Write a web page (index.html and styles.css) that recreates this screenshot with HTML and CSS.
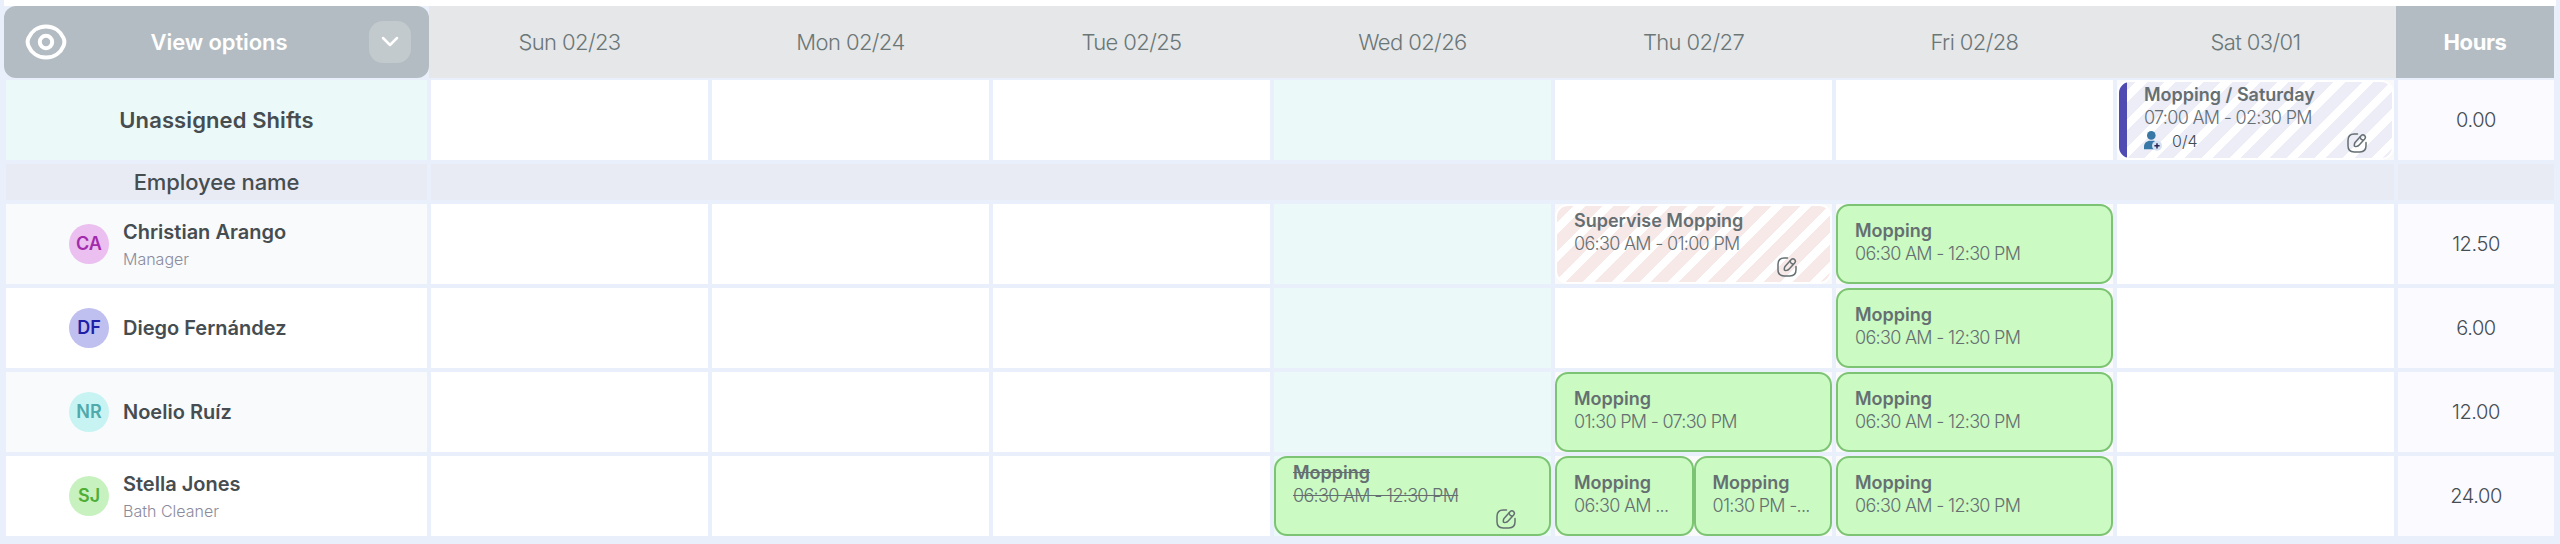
FILE: index.html
```
<!DOCTYPE html>
<html lang="en">
<head>
    <meta charset="UTF-8">
    <meta name="viewport" content="width=device-width, initial-scale=1.0">
    <title>Weekly Schedule</title>
    <link rel="stylesheet" href="styles.css">
</head>
<body>
    <!-- Shared icons -->
    <svg class="icon-defs" width="0" height="0">
        <symbol id="icon-edit" viewBox="0 0 20 20">
            <path d="M10.5 1H7.2C3.2 1 1 3.2 1 7.2v5.6C1 16.8 3.2 19 7.2 19h5.6c4 0 6.2-2.2 6.2-6.2V9.5"/>
            <path d="M14.3 2.6 8.2 9.2c-.4.5-.7 1.2-.8 1.8l-.1 1.4c0 .7.5 1.2 1.2 1.1l1.5-.2c.6-.1 1.2-.4 1.7-.9l6-6.400c1-1.100 1-2.300-.1-3.400s-2.300-1.100-3.300 0z"/>
            <path d="M13 4.100c.4 1.500 1.700 2.700 3.200 3.100"/>
        </symbol>
    </svg>

    <div class="schedule">
        <div class="schedule-header">
            <div class="view-options">
                <svg class="eye-icon" width="42" height="36" viewBox="0 0 42 36">
                    <path d="M21 2.500C12 2.500 6 8 3.500 14c-1.300 3-1.300 5 0 8C6 28 12 33.500 21 33.500S36 28 38.500 22c1.300-3 1.300-5 0-8C36 8 30 2.500 21 2.500z"/>
                    <circle cx="21" cy="18" r="6.200"/>
                </svg>
                <span class="view-label">View options</span>
                <button class="toggle-btn">
                    <svg width="18" height="12" viewBox="0 0 18 12"><path d="M2 2l7 7 7-7"/></svg>
                </button>
            </div>
            <div class="days">
                <div class="day">Sun 02/23</div>
                <div class="day">Mon 02/24</div>
                <div class="day">Tue 02/25</div>
                <div class="day">Wed 02/26</div>
                <div class="day">Thu 02/27</div>
                <div class="day">Fri 02/28</div>
                <div class="day">Sat 03/01</div>
            </div>
            <div class="hours-title">Hours</div>
        </div>

        <div class="schedule-body">
            <!-- Unassigned -->
            <div class="cell unassigned">Unassigned Shifts</div>
            <div class="cell"></div>
            <div class="cell"></div>
            <div class="cell"></div>
            <div class="cell today"></div>
            <div class="cell"></div>
            <div class="cell"></div>
            <div class="cell filled">
                <div class="shift open">
                    <div class="shift-title">Mopping / Saturday</div>
                    <div class="shift-time">07:00 AM - 02:30 PM</div>
                    <div class="slots">
                        <svg width="19" height="20" viewBox="0 0 19 20">
                            <circle cx="7.3" cy="4.4" r="4.3" fill="#3878a6"/>
                            <path d="M0 18.200v-2.500C0 12 2.800 9.800 6.200 9.800h2.600c2 0 3.500.6 4.600 1.800v6.600z" fill="#3878a6"/>
                            <circle cx="13" cy="14.8" r="5" fill="#d5e0f1"/>
                            <path d="M13 12.200v5.200M10.400 14.800h5.200" stroke="#2a2555" stroke-width="1.5"/>
                        </svg>
                        <span>0/4</span>
                    </div>
                    <svg class="edit-icon"><use href="#icon-edit"/></svg>
                </div>
            </div>
            <div class="cell hours">0.00</div>

            <!-- Employee header band -->
            <div class="band">Employee name</div>
            <div class="band band-days"></div>
            <div class="band"></div>

            <!-- Christian -->
            <div class="cell employee alt">
                <div class="avatar avatar-ca">CA</div>
                <div class="info">
                    <div class="name">Christian Arango</div>
                    <div class="role">Manager</div>
                </div>
            </div>
            <div class="cell"></div>
            <div class="cell"></div>
            <div class="cell"></div>
            <div class="cell today"></div>
            <div class="cell filled">
                <div class="shift pending">
                    <div class="shift-title">Supervise Mopping</div>
                    <div class="shift-time">06:30 AM - 01:00 PM</div>
                    <svg class="edit-icon"><use href="#icon-edit"/></svg>
                </div>
            </div>
            <div class="cell filled">
                <div class="shift">
                    <div class="shift-title">Mopping</div>
                    <div class="shift-time">06:30 AM - 12:30 PM</div>
                </div>
            </div>
            <div class="cell"></div>
            <div class="cell hours">12.50</div>

            <!-- Diego -->
            <div class="cell employee">
                <div class="avatar avatar-df">DF</div>
                <div class="info">
                    <div class="name">Diego Fernández</div>
                </div>
            </div>
            <div class="cell"></div>
            <div class="cell"></div>
            <div class="cell"></div>
            <div class="cell today"></div>
            <div class="cell"></div>
            <div class="cell filled">
                <div class="shift">
                    <div class="shift-title">Mopping</div>
                    <div class="shift-time">06:30 AM - 12:30 PM</div>
                </div>
            </div>
            <div class="cell"></div>
            <div class="cell hours">6.00</div>

            <!-- Noelio -->
            <div class="cell employee alt">
                <div class="avatar avatar-nr">NR</div>
                <div class="info">
                    <div class="name">Noelio Ruíz</div>
                </div>
            </div>
            <div class="cell"></div>
            <div class="cell"></div>
            <div class="cell"></div>
            <div class="cell today"></div>
            <div class="cell filled">
                <div class="shift">
                    <div class="shift-title">Mopping</div>
                    <div class="shift-time">01:30 PM - 07:30 PM</div>
                </div>
            </div>
            <div class="cell filled">
                <div class="shift">
                    <div class="shift-title">Mopping</div>
                    <div class="shift-time">06:30 AM - 12:30 PM</div>
                </div>
            </div>
            <div class="cell"></div>
            <div class="cell hours">12.00</div>

            <!-- Stella -->
            <div class="cell employee">
                <div class="avatar avatar-sj">SJ</div>
                <div class="info">
                    <div class="name">Stella Jones</div>
                    <div class="role">Bath Cleaner</div>
                </div>
            </div>
            <div class="cell"></div>
            <div class="cell"></div>
            <div class="cell"></div>
            <div class="cell today">
                <div class="shift cancelled">
                    <div class="shift-title">Mopping</div>
                    <div class="shift-time">06:30 AM - 12:30 PM</div>
                    <svg class="edit-icon"><use href="#icon-edit"/></svg>
                </div>
            </div>
            <div class="cell filled">
                <div class="shift">
                    <div class="shift-title">Mopping</div>
                    <div class="shift-time">06:30 AM ...</div>
                </div>
                <div class="shift">
                    <div class="shift-title">Mopping</div>
                    <div class="shift-time">01:30 PM -...</div>
                </div>
            </div>
            <div class="cell filled">
                <div class="shift">
                    <div class="shift-title">Mopping</div>
                    <div class="shift-time">06:30 AM - 12:30 PM</div>
                </div>
            </div>
            <div class="cell"></div>
            <div class="cell hours">24.00</div>
        </div>
    </div>
</body>
</html>
```
FILE: styles.css
```
* {
    box-sizing: border-box;
}
body {
    margin: 0;
    font-family: Inter, "Liberation Sans", sans-serif;
    background-color: #e9f0fb;
    color: #464d50;
    overflow: hidden;
}
.icon-defs {
    display: none;
}
.schedule {
    width: 2560px;
    height: 544px;
}

/* Header */
.schedule-header {
    display: flex;
    height: 78px;
    margin: 0 4px 2px;
    border-top: 6px solid #fff;
}
.view-options {
    display: flex;
    align-items: center;
    justify-content: space-between;
    width: 425px;
    padding: 0 18px 0 21px;
    border-radius: 12px;
    background-color: #b3bcc2;
    color: #fff;
}
.eye-icon {
    fill: none;
    stroke: #fff;
    stroke-width: 4;
}
.view-label {
    font-size: 22px;
    font-weight: 600;
    letter-spacing: -0.1px;
    padding-left: 2px;
}
.toggle-btn {
    display: flex;
    align-items: center;
    justify-content: center;
    width: 42px;
    height: 42px;
    padding: 0;
    border: none;
    border-radius: 14px;
    background-color: #c3cacd;
}
.toggle-btn path {
    fill: none;
    stroke: #fff;
    stroke-width: 2.5;
    stroke-linecap: round;
    stroke-linejoin: round;
}
.days {
    display: flex;
    width: 1967px;
    background-color: #e5e7e8;
}
.day {
    flex: 1;
    display: flex;
    align-items: center;
    justify-content: center;
    font-size: 22px;
    font-weight: 350;
    letter-spacing: -0.6px;
    color: #6b7677;
}
.hours-title {
    display: flex;
    align-items: center;
    justify-content: center;
    width: 158px;
    background-color: #b3bcc2;
    color: #fff;
    font-size: 22px;
    font-weight: 700;
    letter-spacing: -0.4px;
}

/* Grid */
.schedule-body {
    display: grid;
    grid-template-columns: 421px repeat(7, 277px) 156px;
    grid-template-rows: 80px 36px repeat(4, 80px);
    gap: 4px;
    padding-left: 6px;
}
.cell {
    display: flex;
    background-color: #fff;
    min-width: 0;
}
.today {
    background-color: #ecf9f9;
}
.filled {
    background-color: #fafafa;
}
.unassigned {
    align-items: center;
    justify-content: center;
    background-color: #ecf9f9;
    font-size: 22px;
    font-weight: 600;
    letter-spacing: 0.1px;
}
.hours {
    align-items: center;
    justify-content: center;
    background-color: #fafaff;
    font-size: 20px;
    font-weight: 350;
    letter-spacing: -0.4px;
}
.band {
    display: flex;
    align-items: center;
    justify-content: center;
    background-color: #e8ebf4;
    font-size: 22px;
    font-weight: 500;
    letter-spacing: -0.1px;
}
.band-days {
    grid-column: span 7;
}

/* Employees */
.employee {
    align-items: center;
    gap: 14px;
    padding-left: 63px;
}
.alt {
    background-color: #f8fafc;
}
.avatar {
    width: 40px;
    height: 40px;
    border-radius: 50%;
    font-size: 18px;
    font-weight: 600;
    line-height: 39px;
    text-align: center;
}
.avatar-ca {
    background-color: #ebbff0;
    color: #a32bab;
}
.avatar-df {
    background-color: #bfbff0;
    color: #1f1fa8;
}
.avatar-nr {
    background-color: #c8f3f3;
    color: #50a9ab;
}
.avatar-sj {
    background-color: #c7f2c0;
    color: #4fae37;
}
.name {
    font-size: 20px;
    font-weight: 600;
    line-height: 31px;
}
.role {
    font-size: 16px;
    font-weight: 350;
    line-height: 22px;
    padding-bottom: 2px;
    color: #8b8b9d;
}

/* Shifts */
.shift {
    position: relative;
    flex: 1;
    min-width: 0;
    padding: 14px 19px 0 17px;
    border: 2px solid #7cc473;
    border-radius: 13px;
    background-color: #cbfac2;
    color: #656f72;
    font-size: 18px;
}
.shift-title {
    height: 21px;
    line-height: 21px;
    font-weight: 600;
    white-space: nowrap;
    overflow: hidden;
}
.shift-time {
    font-weight: 350;
    letter-spacing: -0.7px;
    line-height: 25px;
    white-space: nowrap;
}
.edit-icon {
    position: absolute;
    right: 33px;
    top: 51px;
    width: 20px;
    height: 20px;
    fill: none;
    stroke: #656f72;
    stroke-width: 1.5;
    stroke-linecap: round;
    stroke-linejoin: round;
}
.cancelled,
.pending {
    padding-top: 4px;
}
.cancelled {
    text-decoration: line-through;
}
.pending {
    border-color: #fff;
    background: repeating-linear-gradient(135deg, #f8e9e9 0, #f8e9e9 12px, #fff 12px, #fff 20px);
}
.open {
    padding: 2px 0 0 25px;
    border-color: #fff;
    background: linear-gradient(90deg, #4f4bb3 8px, transparent 8px),
                repeating-linear-gradient(135deg, #ededf8 0, #ededf8 12px, #fff 12px, #fff 20px);
}
.open .edit-icon {
    right: 25px;
}
.slots {
    display: flex;
    align-items: center;
    gap: 9px;
    height: 20px;
    padding-top: 2px;
    font-size: 16px;
    font-weight: 350;
    color: #464d50;
}
```
